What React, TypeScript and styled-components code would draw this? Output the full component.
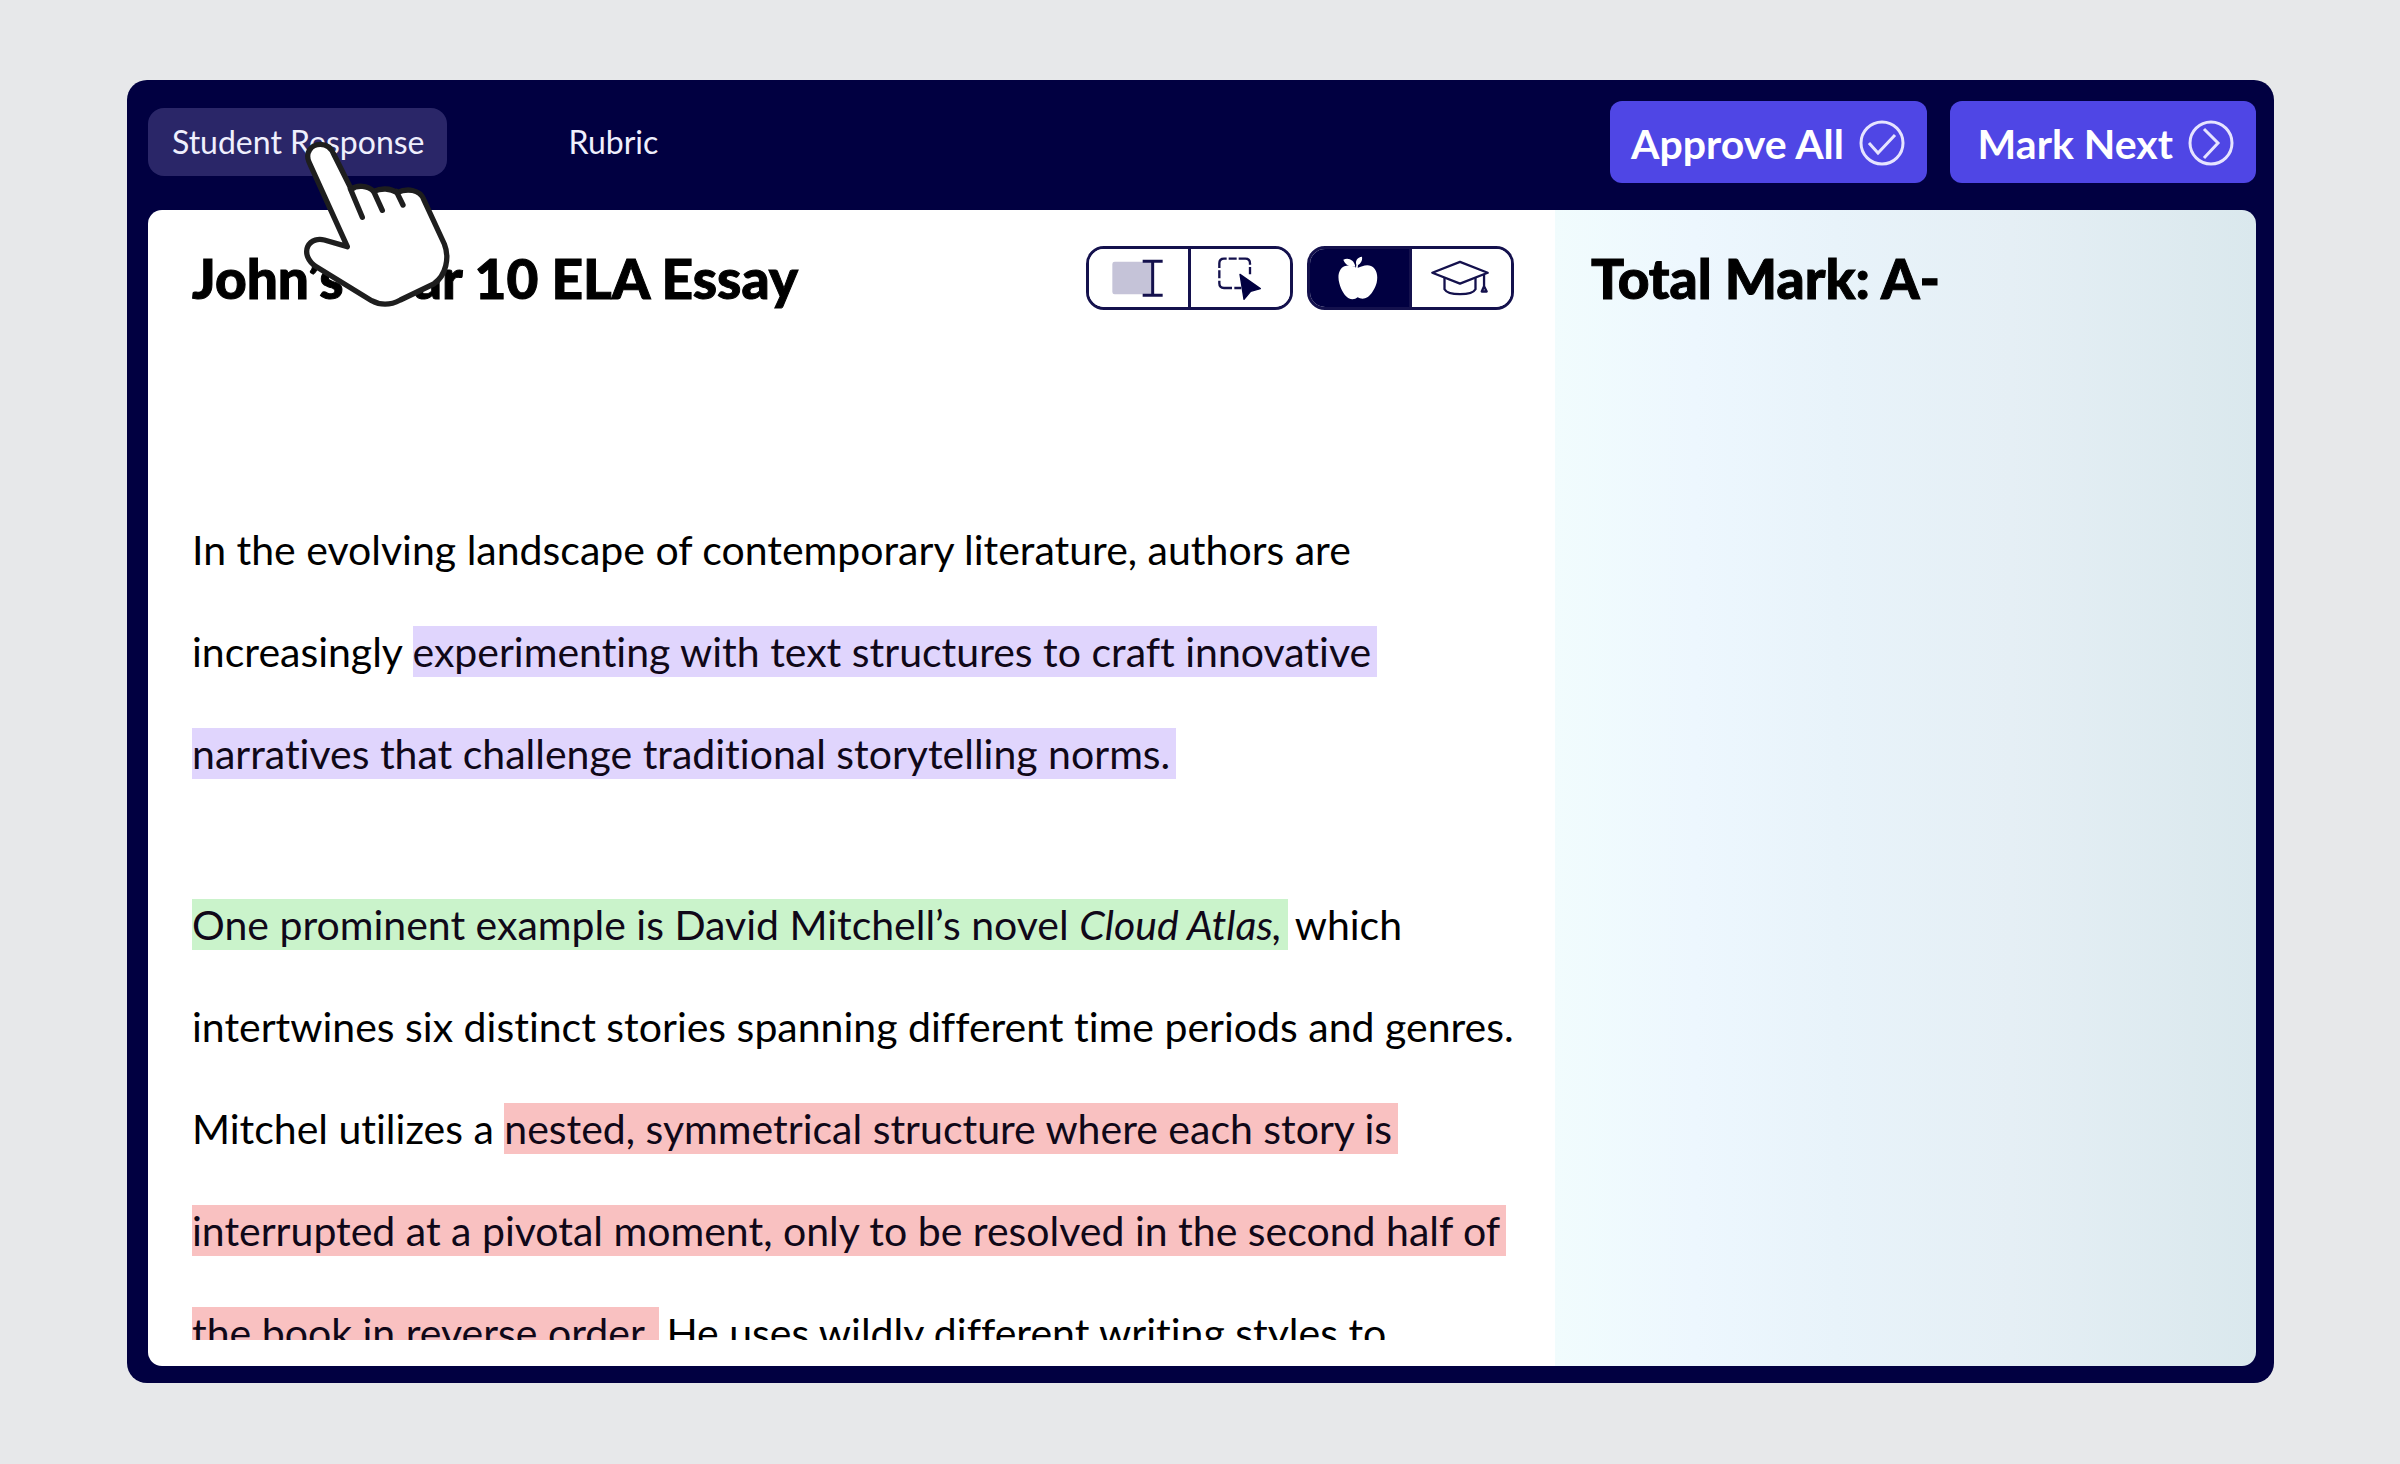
import React, { useState } from 'react';
import styled, { createGlobalStyle } from 'styled-components';

const GlobalStyle = createGlobalStyle`
  *, *::before, *::after { box-sizing: border-box; }
  body {
    margin: 0;
    background: #e7e8ea;
    font-family: Lato, 'Liberation Sans', sans-serif;
    font-variant-ligatures: none;
    color: #000;
  }
  h1, h2, p { margin: 0; }
  button { font: inherit; cursor: pointer; }
`;

const Stage = styled.main`
  display: flex;
  height: 100vh;
  padding: 80px 126px 81px 127px;
`;

const AppWindow = styled.div`
  position: relative;
  flex: 1;
  min-width: 0;
  display: flex;
  flex-direction: column;
  padding: 21px 18px 17px 21px;
  border-radius: 20px;
  background: #010041;
`;

const TopBar = styled.header`
  display: flex;
  align-items: center;
  justify-content: space-between;
  padding-bottom: 27px;
`;

const Tabs = styled.nav`
  display: flex;
  gap: 98px;
`;

const Tab = styled.button<{ $active?: boolean }>`
  height: 68px;
  padding: 0 22px 0 24px;
  border: 0;
  border-radius: 16px;
  background: ${(p) => (p.$active ? '#2a2668' : 'transparent')};
  color: #efeffd;
  font-size: 32px;
  line-height: 68px;
`;

const Actions = styled.div`
  display: flex;
  gap: 23px;
`;

const ActionButton = styled.button`
  display: flex;
  align-items: center;
  justify-content: flex-end;
  gap: 15px;
  min-width: 306px;
  height: 82px;
  padding: 2px 22px 0 21px;
  border: 0;
  border-radius: 12px;
  background: #4f46e5;
  color: #fff;
  font-size: 41px;
  font-weight: 700;
`;

const Panels = styled.div`
  flex: 1;
  min-height: 0;
  display: grid;
  grid-template-columns: 1407fr 701fr;
  border-radius: 14px;
  overflow: hidden;
`;

const EssayPanel = styled.section`
  display: flex;
  flex-direction: column;
  min-height: 0;
  padding: 36px 36px 26px 44px;
  background: #fff;
`;

const MarkPanel = styled.aside`
  padding: 36px;
  background: linear-gradient(90deg, #f1fcfd 0%, #edf7fe 20%, #e8f3fa 40%, #e5eff5 65%, #dae8ed 100%);
`;

const EssayHeader = styled.div`
  display: flex;
  align-items: center;
  justify-content: space-between;
  padding-right: 5px;
`;

const Heading = styled.h2`
  font-size: 55px;
  line-height: 64px;
  font-weight: 900;
  -webkit-text-stroke: 1px #000;
`;

const Tools = styled.div`
  display: flex;
  gap: 14px;
`;

const Segmented = styled.div`
  display: flex;
  width: 207px;
  height: 64px;
  border: 3px solid #14114d;
  border-radius: 18px;
  overflow: hidden;
`;

const Segment = styled.button<{ $on?: boolean }>`
  flex: 1;
  display: flex;
  align-items: center;
  justify-content: center;
  padding: 0 3px 0 0;
  border: 0;
  background: ${(p) => (p.$on ? '#010041' : '#fff')};
  & + & { border-left: 3px solid #14114d; }
`;

const EssayBody = styled.article`
  flex: 1;
  min-height: 0;
  overflow: hidden;
  padding-top: 189px;
  font-size: 41px;
  line-height: 102px;
`;

const Paragraph = styled.p`
  & + & { margin-top: 69px; }
`;

const tones = { violet: '#e0d5fd', green: '#caf3cb', red: '#f9c1c1' };

const Highlight = styled.mark<{ $tone: keyof typeof tones }>`
  margin-right: -3px;
  padding: 1px 6px 1px 0;
  -webkit-box-decoration-break: clone;
  box-decoration-break: clone;
  background: ${(p) => tones[p.$tone]};
  color: #100818;
`;

const Pointer = styled.svg`
  position: absolute;
  top: 60px;
  left: 176px;
  width: 150px;
  height: 170px;
  pointer-events: none;
`;

const stroke = '#14114d';

const TextSelectIcon = () => (
  <svg width="51" height="38" viewBox="156 117 153 114" aria-hidden="true">
    <rect x="157" y="125" width="120" height="98" rx="7" fill="#c5c3d8" />
    <path d="M248 124H308M248 226H308M278 124V226" stroke={stroke} strokeWidth="9" fill="none" />
  </svg>
);

const AreaSelectIcon = () => (
  <svg width="43" height="43" viewBox="480 116 129 129" aria-hidden="true">
    <path
      d="M484 149V135Q484 121 498 121H506M512 121H536M542 121H562Q576 121 576 135V139M576 146V168M484 156V180M484 187V195Q484 209 498 209H522M529 209H550"
      fill="none"
      stroke={stroke}
      strokeWidth="7"
    />
    <path d="M546 168L607 211L578 219L558 243Z" fill="#010041" stroke="#010041" strokeWidth="4" strokeLinejoin="round" />
  </svg>
);

const AppleIcon = () => (
  <svg width="40" height="44" viewBox="834 106 120 132" aria-hidden="true">
    <path
      fill="#fff"
      d="M890 141C878 136 866 131 853 137C836 145 832 167 838 188C843 208 855 227 866 233C876 238 886 236 893 230C901 235 913 236 922 230C934 222 945 204 950 186C955 163 949 143 933 136C919 130 904 138 894 141Z"
    />
    <path fill="#fff" d="M886 138C873 140 856 134 850 117C866 110 882 118 886 138Z" />
    <path fill="#fff" d="M889 132C885 120 892 110 906 108C908 120 902 128 894 133L893 142H888Z" />
  </svg>
);

const CapIcon = () => (
  <svg width="58" height="36" viewBox="1112 121 176 108" aria-hidden="true" fill="none" stroke={stroke} strokeWidth="7" strokeLinejoin="round">
    <path d="M1116 159L1200 126L1284 159L1200 192Z" />
    <path d="M1153 175V209C1164 229 1236 229 1247 209V175" />
    <path d="M1273 165V202M1273 200L1266 216H1281Z" />
  </svg>
);

const CheckCircle = () => (
  <svg width="46" height="46" viewBox="0 0 46 46" aria-hidden="true" fill="none" stroke="#e6e4ff" strokeWidth="3">
    <circle cx="23" cy="23" r="21" />
    <path d="M10 23L19 33L36 15" />
  </svg>
);

const ChevronCircle = () => (
  <svg width="46" height="46" viewBox="0 0 46 46" aria-hidden="true" fill="none" stroke="#e6e4ff" strokeWidth="3">
    <circle cx="23" cy="23" r="21" />
    <path d="M16 9L30 23L16 38" />
  </svg>
);

const HandPointer = () => (
  <Pointer viewBox="70 60 450 510" aria-hidden="true">
    <path
      d="M203 380L88 126C76 98 94 73 122 73C143 73 154 83 162 102L215 208C232 194 264 196 282 214C304 204 332 204 352 218C382 204 420 208 432 238L494 372C510 412 500 466 462 492L362 540C332 556 302 556 276 542L110 440C84 424 76 398 84 380C94 358 118 356 134 360Z"
      fill="#fff"
      stroke="#1e1e1e"
      strokeWidth="16"
      strokeLinejoin="round"
    />
    <path d="M212 206L248 292M282 214L308 271M350 214L370 255" fill="none" stroke="#1e1e1e" strokeWidth="16" strokeLinecap="round" />
  </Pointer>
);

const tabs = ['Student Response', 'Rubric'];

export default function App() {
  const [tab, setTab] = useState(tabs[0]);
  return (
    <>
      <GlobalStyle />
      <Stage>
        <AppWindow>
          <TopBar>
            <Tabs aria-label="Essay views">
              {tabs.map((name) => (
                <Tab key={name} type="button" $active={name === tab} onClick={() => setTab(name)}>
                  {name}
                </Tab>
              ))}
            </Tabs>
            <Actions>
              <ActionButton type="button">
                Approve All
                <CheckCircle />
              </ActionButton>
              <ActionButton type="button">
                Mark Next
                <ChevronCircle />
              </ActionButton>
            </Actions>
          </TopBar>
          <Panels>
            <EssayPanel>
              <EssayHeader>
                <Heading as="h1">John’s Year 10 ELA Essay</Heading>
                <Tools>
                  <Segmented role="group" aria-label="Selection tool">
                    <Segment type="button" aria-label="Select text"><TextSelectIcon /></Segment>
                    <Segment type="button" aria-label="Select area"><AreaSelectIcon /></Segment>
                  </Segmented>
                  <Segmented role="group" aria-label="Feedback view">
                    <Segment type="button" aria-label="Teacher" $on><AppleIcon /></Segment>
                    <Segment type="button" aria-label="Student"><CapIcon /></Segment>
                  </Segmented>
                </Tools>
              </EssayHeader>
              <EssayBody>
                <Paragraph>
                  In the evolving landscape of contemporary literature, authors are increasingly{' '}
                  <Highlight $tone="violet">
                    experimenting with text structures to craft innovative narratives that challenge traditional
                    storytelling norms.
                  </Highlight>
                </Paragraph>
                <Paragraph>
                  <Highlight $tone="green">
                    One prominent example is David Mitchell’s novel <em>Cloud Atlas,</em>
                  </Highlight>{' '}
                  which intertwines six distinct stories spanning different time periods and genres. Mitchel utilizes a{' '}
                  <Highlight $tone="red">
                    nested, symmetrical structure where each story is interrupted at a pivotal moment, only to be
                    resolved in the second half of the book in reverse order.
                  </Highlight>{' '}
                  He uses wildly different writing styles to
                </Paragraph>
              </EssayBody>
            </EssayPanel>
            <MarkPanel>
              <Heading>Total Mark: A-</Heading>
            </MarkPanel>
          </Panels>
          <HandPointer />
        </AppWindow>
      </Stage>
    </>
  );
}
